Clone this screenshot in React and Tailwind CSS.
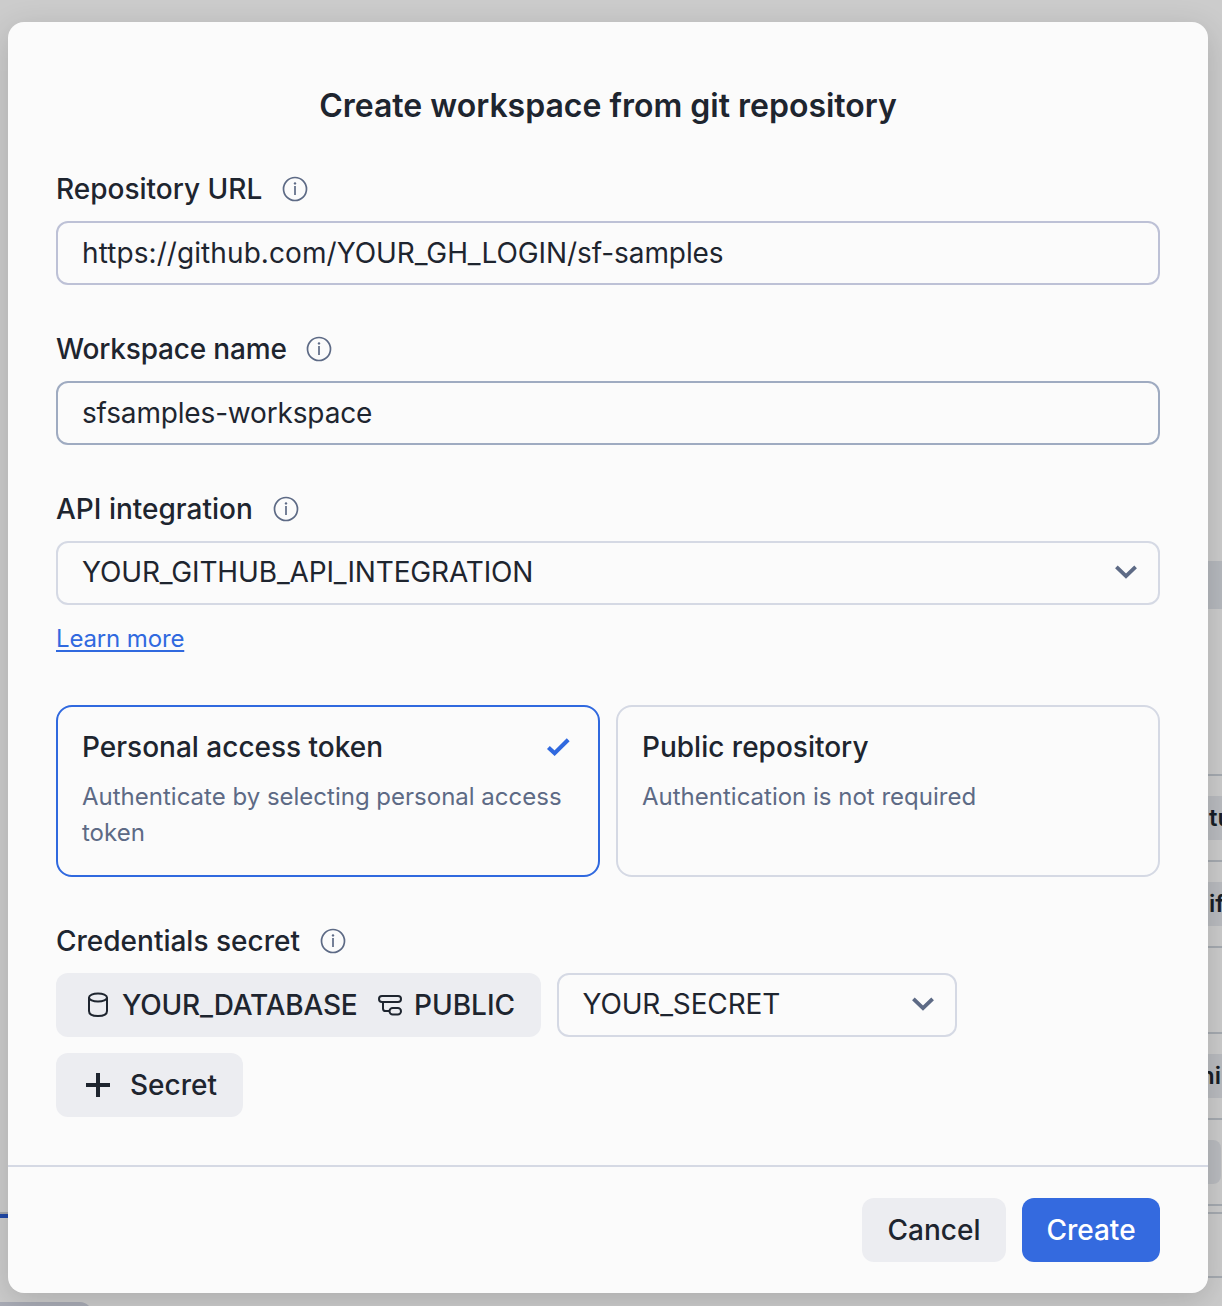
import React from "react";

function InfoIcon() {
  return (
    <svg className="size-[26px] shrink-0" viewBox="0 0 26 26" fill="none">
      <circle cx="13" cy="13" r="11.5" stroke="#5d6a85" strokeWidth="1.7" />
      <circle cx="13" cy="7.4" r="1.2" fill="#5d6a85" />
      <path d="M13 10V19" stroke="#5d6a85" strokeWidth="1.7" />
    </svg>
  );
}

function ChevronIcon() {
  return (
    <svg className="h-[14px] w-[22px] shrink-0" viewBox="0 0 22 14" fill="none">
      <path d="M1.4 1.8L11 11.2L20.6 1.8" stroke="#5d6a85" strokeWidth="3.8" />
    </svg>
  );
}

function CheckIcon() {
  return (
    <svg className="h-[18px] w-6 shrink-0" viewBox="0 0 24 18" fill="none">
      <path d="M2.4 9.4L8.6 15.2L22.2 1.8" stroke="#3069df" strokeWidth="4.1" />
    </svg>
  );
}

function DatabaseIcon() {
  return (
    <svg className="h-[26px] w-[22px] shrink-0" viewBox="0 0 22 26" fill="none" stroke="#1e252f" strokeWidth="2">
      <ellipse cx="11" cy="5.5" rx="9" ry="4" />
      <path d="M2 5.5V19C2 22.2 4.8 24 11 24S20 22.2 20 19V5.5" />
    </svg>
  );
}

function SchemaIcon() {
  return (
    <svg className="h-[22px] w-6 shrink-0" viewBox="0 0 24 22" fill="none" stroke="#1e252f" strokeWidth="2">
      <rect x="1" y="2" width="22" height="6" rx="3" />
      <path d="M5 8V14.4Q5 17 7.6 17H11" />
      <rect x="11.5" y="14" width="11.5" height="6.5" rx="3.2" />
    </svg>
  );
}

function PlusIcon() {
  return (
    <svg className="size-6 shrink-0" viewBox="0 0 24 24" fill="none">
      <path d="M12 0V24M0 12H24" stroke="#1e252f" strokeWidth="4" />
    </svg>
  );
}

function Label({ children, className = "" }) {
  return (
    <div className={`flex h-[34px] shrink-0 items-center whitespace-nowrap text-[28px] font-medium ${className}`}>
      {children}
      <InfoIcon />
    </div>
  );
}

function ObscuredPage() {
  return (
    <div className="col-start-1 row-start-1 flex justify-between">
      <div className="flex w-[92px] flex-col">
        <div className="mt-[1212px] box-content h-1 w-full border-t-2 border-[#a3a7ac]">
          <div className="h-1 bg-[#2149a8]" />
        </div>
        <div className="mt-[84px] h-4 w-[92px] rounded-tr-xl bg-[#a9acb6]" />
      </div>
      <div className="flex w-[14px] flex-col overflow-hidden text-[24px] font-semibold leading-[44px] text-[#171e27]">
        <div className="mt-[561px] h-12 shrink-0 bg-[#b6b9be]" />
        <div className="h-[167px] shrink-0 border-b-2 border-[#a6abb1]" />
        <div className="flex h-[86px] shrink-0 items-center border-b-2 border-[#a6abb1]">
          <span className="h-11 w-full bg-[#babcc0] pl-px">tu</span>
        </div>
        <div className="flex h-[86px] shrink-0 items-center border-b-2 border-[#a6abb1]">
          <span className="h-11 w-full bg-[#babcc0] pl-px">if</span>
        </div>
        <div className="h-[86px] shrink-0 border-b-2 border-[#a6abb1]" />
        <div className="flex h-[86px] shrink-0 items-center border-b-2 border-[#a6abb1]">
          <span className="flex h-11 w-full justify-end bg-[#babcc0] pr-px">hi</span>
        </div>
        <div className="flex h-[86px] shrink-0 items-center border-b-2 border-[#a6abb1]">
          <span className="h-11 w-[13px] rounded-r-lg bg-[#babcc0]" />
        </div>
        <div className="h-2 shrink-0 border-b-2 border-[#a6abb1]" />
        <div className="h-16 shrink-0 border-b-2 border-[#a6abb1]" />
      </div>
    </div>
  );
}

export default function App() {
  return (
    <div className="grid h-[1306px] w-[1222px] overflow-hidden bg-[#cccccc] font-['Inter',sans-serif] text-[#1e252f]">
      <ObscuredPage />
      <main className="z-10 col-start-1 row-start-1 ml-2 mt-[22px] flex h-[1271px] w-[1200px] flex-col rounded-2xl bg-[#fbfbfb] shadow-[0_8px_32px_rgba(0,0,0,0.16)]">
        <div className="flex h-[1143px] flex-col px-12">
          <h1 className="mt-16 h-10 shrink-0 text-center text-[32px] font-semibold leading-10">Create workspace from git repository</h1>

          <Label className="mt-[46px] gap-5">Repository URL</Label>
          <div className="mt-[15px] flex h-16 shrink-0 items-center rounded-xl border-2 border-[#bdc1d6] px-6 text-[28px]">
            <span className="tracking-[0.08px]">https://github.com/</span>
            <span className="tracking-[-0.08px]">YOUR_GH_LOGIN/sf-samples</span>
          </div>

          <Label className="mt-[47px] gap-[19px] tracking-[-0.18px]">Workspace name</Label>
          <div className="mt-[15px] flex h-16 shrink-0 items-center rounded-xl border-2 border-[#9fabc1] px-6 text-[28px] tracking-[-0.16px]">sfsamples-workspace</div>

          <Label className="mt-[47px] gap-5">API integration</Label>
          <div className="mt-[15px] flex h-16 shrink-0 items-center justify-between rounded-xl border-2 border-[#d5d9e4] pb-0.5 pl-6 pr-[21px] text-[28px] tracking-[-0.14px]">
            YOUR_GITHUB_API_INTEGRATION
            <ChevronIcon />
          </div>
          <a className="mt-4 h-9 self-start text-2xl leading-9 tracking-[-0.14px] text-[#3069df] underline underline-offset-[3px]">Learn more</a>

          <div className="mt-12 grid h-[172px] shrink-0 grid-cols-2 gap-4">
            <div className="rounded-2xl border-2 border-[#3069df] px-6 pt-5">
              <div className="flex h-10 items-center justify-between pr-1 text-[28px] font-medium">
                Personal access token
                <CheckIcon />
              </div>
              <p className="mt-3 text-2xl leading-9 text-[#5d6a85]">Authenticate by selecting personal access token</p>
            </div>
            <div className="rounded-2xl border-2 border-[#d5d9e4] px-6 pt-5">
              <div className="flex h-10 items-center text-[28px] font-medium">Public repository</div>
              <p className="mt-3 text-2xl leading-9 text-[#5d6a85]">Authentication is not required</p>
            </div>
          </div>

          <Label className="mt-[47px] gap-5">Credentials secret</Label>
          <div className="mt-[15px] flex gap-4">
            <div className="flex h-16 w-[485px] items-center whitespace-nowrap rounded-xl bg-[#ecedf1] pl-[31px] text-[28px] font-medium">
              <DatabaseIcon />
              <span className="ml-[13px] w-[235px] tracking-[-0.2px]">YOUR_DATABASE</span>
              <span className="ml-[21px] flex"><SchemaIcon /></span>
              <span className="ml-3">PUBLIC</span>
            </div>
            <div className="flex h-16 w-[400px] items-center justify-between rounded-xl border-2 border-[#d5d9e4] pb-0.5 pl-[23.5px] pr-[21px] text-[28px] tracking-[-0.15px]">
              YOUR_SECRET
              <ChevronIcon />
            </div>
          </div>
          <button className="mt-4 flex h-16 w-[187px] items-center gap-5 rounded-xl bg-[#ecedf1] pl-[30px] text-[28px] font-medium">
            <PlusIcon />
            Secret
          </button>
        </div>
        <footer className="flex h-32 items-start justify-end gap-4 border-t-2 border-[#d5d9e4] px-12 pt-[31px] text-[28px] font-medium">
          <button className="h-16 w-36 rounded-xl bg-[#ecedf1]">Cancel</button>
          <button className="h-16 w-[138px] rounded-xl bg-[#346adf] text-white">Create</button>
        </footer>
      </main>
    </div>
  );
}
